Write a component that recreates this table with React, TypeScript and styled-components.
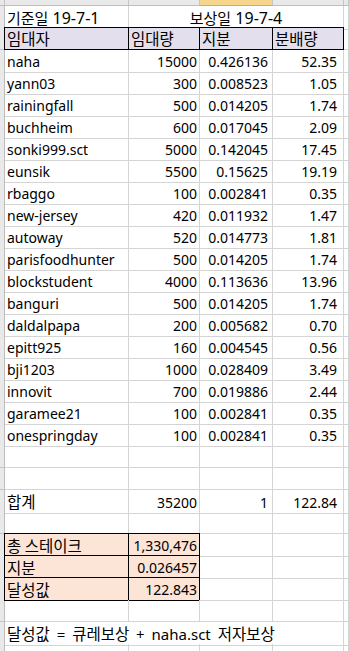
import React from "react";
import styled, { createGlobalStyle, css } from "styled-components";

const GlobalStyle = createGlobalStyle`
  body {
    margin: 0;
    background: #ffffff;
    font-family: "Noto Sans", "Noto Sans CJK KR", sans-serif;
  }
`;

const COLS = "5px 124px 71px 73px 71px 1fr";
const GRID = "#d4d4d4";

const Sheet = styled.div`
  width: 349px;
  height: 651px;
  overflow: hidden;
  display: flex;
  flex-direction: column;
  background: #fff;
  color: #000;
  font-size: 14px;
`;

const HeaderStrip = styled.div`
  display: grid;
  grid-template-columns: ${COLS};
  height: 6px;
  flex: none;
`;

const HeadCell = styled.div<{ $selected?: boolean }>`
  background: ${({ $selected }) => ($selected ? "#f6d68c" : "#e9e9e9")};
  border-right: 1px solid #c4c4c4;
  border-bottom: 1px solid ${({ $selected }) => ($selected ? "#e2a94a" : "#bdbdbd")};
`;

const Row = styled.div`
  display: grid;
  grid-template-columns: ${COLS};
  height: 22px;
  flex: none;
`;

const RowHead = styled.div`
  background: #e9e9e9;
  border-right: 1px solid #bdbdbd;
  border-bottom: 1px solid #c4c4c4;
`;

type CellProps = {
  $align?: "left" | "right" | "center";
  $pr?: number;
  $open?: boolean;
  $boxed?: boolean;
  $fill?: string;
};

const Cell = styled.div<CellProps>`
  position: relative;
  display: flex;
  align-items: center;
  justify-content: ${({ $align }) =>
    $align === "right" ? "flex-end" : $align === "center" ? "center" : "flex-start"};
  padding: 0 ${({ $pr }) => $pr ?? 2}px 0 2px;
  white-space: nowrap;
  overflow: visible;
  line-height: 21px;
  background: ${({ $fill }) => $fill ?? "transparent"};
  border-right: 1px solid ${({ $open, $fill }) => ($open ? $fill ?? "transparent" : GRID)};
  border-bottom: 1px solid ${GRID};
  ${({ $boxed }) =>
    $boxed &&
    css`
      &::before {
        content: "";
        position: absolute;
        top: -1px;
        left: -1px;
        right: -1px;
        bottom: -1px;
        border: 1px solid #000;
        pointer-events: none;
      }
    `}
`;

const Text = styled.span`
  padding-top: 1px;
`;

/* free text lines (dates, the note) sit a bit wider than the numbers */
const Note = styled.span<{ $size?: number; $spacing?: number }>`
  padding-top: 1px;
  font-size: ${({ $size }) => $size ?? 15}px;
  word-spacing: ${({ $spacing }) => $spacing ?? 3}px;
`;

/* hangul runs render a touch larger, like Malgun Gothic does in the sheet */
const Ko = styled.span<{ $size?: number }>`
  font-family: "Noto Sans CJK KR", sans-serif;
  font-size: ${({ $size }) => $size ?? 15.5}px;
  line-height: 21px;
`;

const HEADER_FILL = "#e4dfec";
const BOX_FILL = "#fce4d6";

const rows: [string, string, string, string][] = [
  ["naha", "15000", "0.426136", "52.35"],
  ["yann03", "300", "0.008523", "1.05"],
  ["rainingfall", "500", "0.014205", "1.74"],
  ["buchheim", "600", "0.017045", "2.09"],
  ["sonki999.sct", "5000", "0.142045", "17.45"],
  ["eunsik", "5500", "0.15625", "19.19"],
  ["rbaggo", "100", "0.002841", "0.35"],
  ["new-jersey", "420", "0.011932", "1.47"],
  ["autoway", "520", "0.014773", "1.81"],
  ["parisfoodhunter", "500", "0.014205", "1.74"],
  ["blockstudent", "4000", "0.113636", "13.96"],
  ["banguri", "500", "0.014205", "1.74"],
  ["daldalpapa", "200", "0.005682", "0.70"],
  ["epitt925", "160", "0.004545", "0.56"],
  ["bji1203", "1000", "0.028409", "3.49"],
  ["innovit", "700", "0.019886", "2.44"],
  ["garamee21", "100", "0.002841", "0.35"],
  ["onespringday", "100", "0.002841", "0.35"],
];

const summary: [string, string][] = [
  ["총 스테이크", "1,330,476"],
  ["지분", "0.026457"],
  ["달성값", "122.843"],
];

const EmptyRow: React.FC = () => (
  <Row>
    <RowHead />
    <Cell />
    <Cell />
    <Cell />
    <Cell />
    <Cell />
  </Row>
);

const DataRow: React.FC<{ cells: React.ReactNode[] }> = ({ cells }) => (
  <Row>
    <RowHead />
    <Cell>
      <Text>{cells[0]}</Text>
    </Cell>
    <Cell $align="right">
      <Text>{cells[1]}</Text>
    </Cell>
    <Cell $align="right" $pr={4}>
      <Text>{cells[2]}</Text>
    </Cell>
    <Cell $align="right" $pr={6}>
      <Text>{cells[3]}</Text>
    </Cell>
    <Cell />
  </Row>
);

const App: React.FC = () => {
  return (
    <>
      <GlobalStyle />
      <Sheet>
        <HeaderStrip>
          <HeadCell />
          <HeadCell />
          <HeadCell />
          <HeadCell $selected />
          <HeadCell />
          <HeadCell />
        </HeaderStrip>

        <Row>
          <RowHead />
          <Cell>
            <Note $size={16} $spacing={0}>
              <Ko $size={15}>기준일</Ko> 19-7-1
            </Note>
          </Cell>
          <Cell $open />
          <Cell $open $align="center">
            <Note $size={16} $spacing={0}>
              <Ko $size={15}>보상일</Ko> 19-7-4
            </Note>
          </Cell>
          <Cell />
          <Cell />
        </Row>

        <Row>
          <RowHead />
          {["임대자", "임대량", "지분", "분배량"].map((h) => (
            <Cell key={h} $boxed $fill={HEADER_FILL}>
              <Ko>{h}</Ko>
            </Cell>
          ))}
          <Cell />
        </Row>

        {rows.map((r) => (
          <DataRow key={r[0]} cells={r} />
        ))}

        <EmptyRow />
        <EmptyRow />
        <DataRow cells={[<Ko key="k">합계</Ko>, "35200", "1", "122.84"]} />
        <EmptyRow />

        {summary.map(([label, value]) => (
          <Row key={label}>
            <RowHead />
            <Cell $boxed $fill={BOX_FILL}>
              <Ko>{label}</Ko>
            </Cell>
            <Cell $boxed $fill={BOX_FILL} $align="right">
              <Text>{value}</Text>
            </Cell>
            <Cell />
            <Cell />
            <Cell />
          </Row>
        ))}

        <EmptyRow />
        <Row>
          <RowHead />
          <Cell $open>
            <Note>
              <Ko>달성값</Ko> = <Ko>큐레보상</Ko> + naha.sct <Ko>저자보상</Ko>
            </Note>
          </Cell>
          <Cell $open />
          <Cell $open />
          <Cell />
          <Cell />
        </Row>
        <EmptyRow />
      </Sheet>
    </>
  );
};

export default App;
